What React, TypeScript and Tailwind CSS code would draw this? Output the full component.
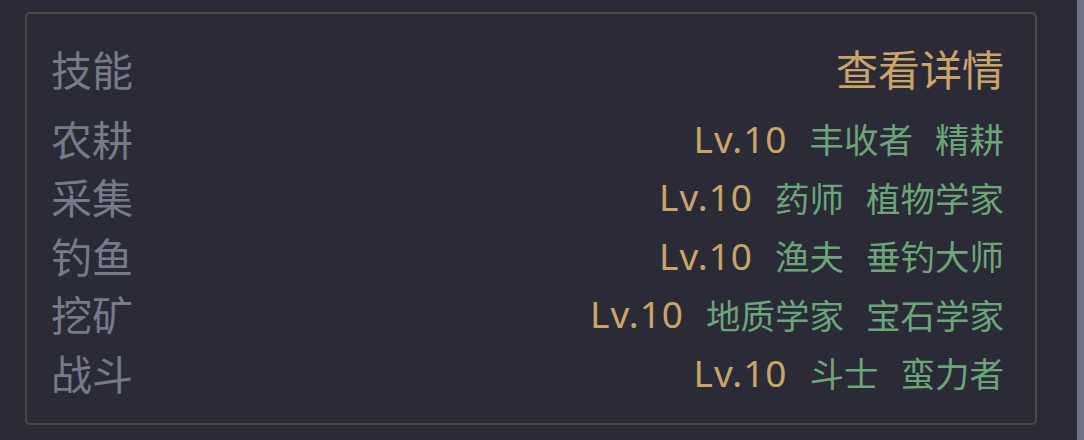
const skills = [
  { name: "农耕", level: 10, titles: ["丰收者", "精耕"] },
  { name: "采集", level: 10, titles: ["药师", "植物学家"] },
  { name: "钓鱼", level: 10, titles: ["渔夫", "垂钓大师"] },
  { name: "挖矿", level: 10, titles: ["地质学家", "宝石学家"] },
  { name: "战斗", level: 10, titles: ["斗士", "蛮力者"] },
];

const cjk = "font-['Noto_Sans_CJK_SC','Noto_Sans',sans-serif]";

export default function App() {
  return (
    <div className={`flex h-[440px] w-[1084px] bg-[#2a2b37] ${cjk}`}>
      <div className="flex-1 pl-[25px] pt-[12px] pr-[40px]">
        <div className="box-border h-[413px] rounded-[5px] border-2 border-[#4b4945] pl-[24px] pr-[31px] pt-[25px]">
          {/* header */}
          <div className="mb-[12px] flex h-[58px] items-center justify-between">
            <span className="text-[41px] leading-none text-[#767b8a]">技能</span>
            <span className="text-[42px] leading-none text-[#caa468]">查看详情</span>
          </div>

          {skills.map((skill) => (
            <div key={skill.name} className="flex h-[58.5px] items-center justify-between">
              <span className="text-[41px] leading-none text-[#767b8a]">{skill.name}</span>
              <div className="flex items-center gap-[22px]">
                <span className="font-['Noto_Sans',sans-serif] text-[37px] leading-none tracking-[1px] text-[#caa468]">
                  Lv.{skill.level}
                </span>
                {skill.titles.map((t) => (
                  <span key={t} className="text-[34.5px] leading-none text-[#6ba579]">
                    {t}
                  </span>
                ))}
              </div>
            </div>
          ))}
        </div>
      </div>
      <div className="w-[7px] bg-[#6e7282]" />
    </div>
  );
}
